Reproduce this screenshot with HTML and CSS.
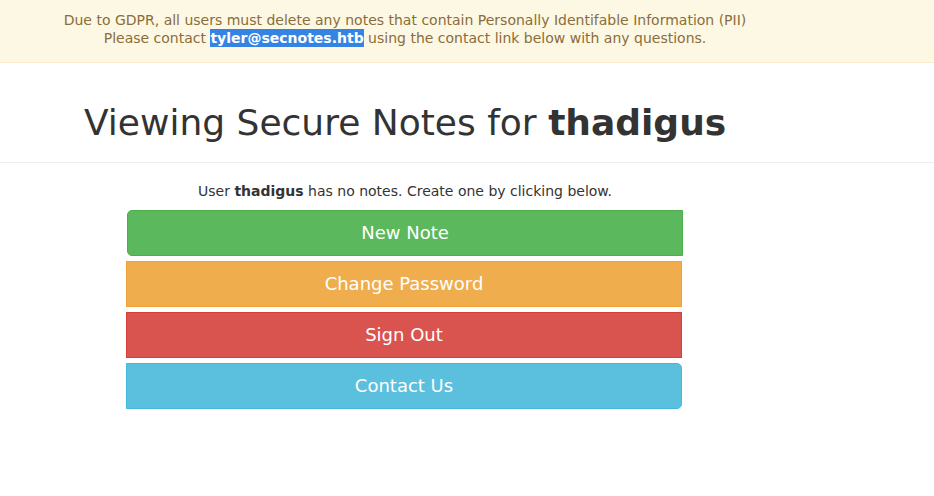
FILE: index.html
```html
<!DOCTYPE html>
<html>
<head>
<meta charset="utf-8">
<title>Secure Notes</title>
<link rel="stylesheet" href="styles.css">
</head>
<body>
<div class="alert">
  <div class="alert-inner">
    <div>Due to GDPR, all users must delete any notes that contain Personally Identifable Information (PII)</div>
    <div>Please contact <strong class="sel">tyler@secnotes.htb</strong> using the contact link below with any questions.</div>
  </div>
</div>
<div class="page-header">
  <h1>Viewing Secure Notes for <strong>thadigus</strong></h1>
</div>
<div class="content">
  <p class="empty">User <strong>thadigus</strong> has no notes. Create one by clicking below.</p>
  <div class="buttons">
    <a class="btn btn-success first">New Note</a>
    <a class="btn btn-warning">Change Password</a>
    <a class="btn btn-danger">Sign Out</a>
    <a class="btn btn-info last">Contact Us</a>
  </div>
</div>
</body>
</html>
```
FILE: styles.css
```css
html, body {
  margin: 0;
  padding: 0;
  background: #fff;
}
body {
  font-family: "DejaVu Sans", sans-serif;
  font-size: 14px;
  line-height: 20px;
  color: #333;
}
.alert {
  background: #fcf8e3;
  border-bottom: 1px solid #faebcc;
  color: #8a6d3b;
  padding: 11px 0 15px;
}
.alert-inner {
  width: 810px;
  text-align: center;
  line-height: 18px;
}
.sel {
  display: inline-block;
  line-height: 18px;
  vertical-align: top;
  background: #3584e4;
  color: #fff;
  font-weight: bold;
}
.page-header {
  margin-top: 40px;
  padding: 0 0 9px 84px;
  border-bottom: 1px solid #eee;
}
.page-header h1 {
  margin: 0 0 10px;
  font-size: 36px;
  line-height: 40px;
  font-weight: 500;
}
.content {
  width: 810px;
}
.empty {
  text-align: center;
  margin: 18px 0 9px;
}
.buttons {
  display: flex;
  flex-direction: column;
  gap: 5px;
  margin-left: 126px;
  width: 556px;
}
.btn {
  display: block;
  box-sizing: border-box;
  height: 46px;
  line-height: 44px;
  text-align: center;
  font-size: 18px;
  color: #fff;
  border: 1px solid transparent;
}
.btn-success { background: #5cb85c; border-color: #4cae4c; }
.btn-warning { background: #f0ad4e; border-color: #eea236; }
.btn-danger { background: #d9534f; border-color: #d43f3a; }
.btn-info { background: #5bc0de; border-color: #46b8da; }
.first {
  margin-left: 1px;
  margin-right: -1px;
  border-radius: 5px 0 0 5px;
}
.last {
  border-radius: 0 5px 5px 0;
}
```
